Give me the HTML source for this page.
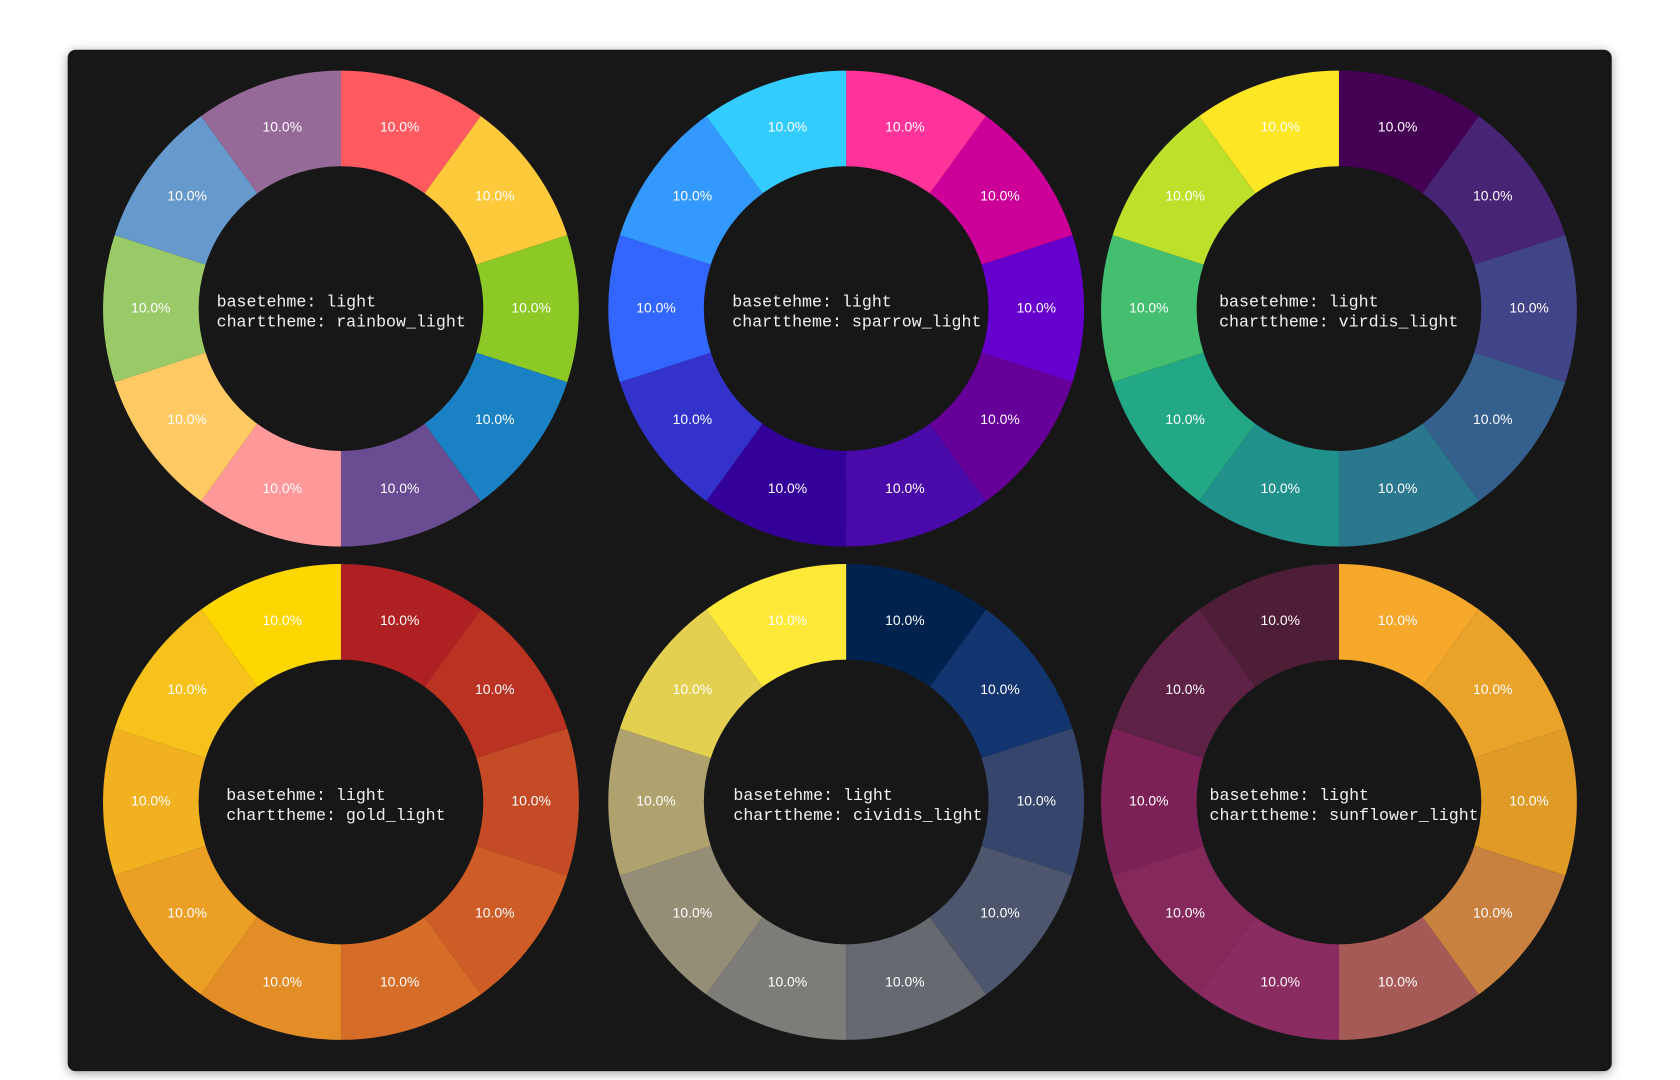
<!DOCTYPE html>
<html><head><meta charset="utf-8"><style>
html,body{margin:0;padding:0;background:#fff;width:1680px;height:1080px;overflow:hidden}
#w{position:absolute;left:0;top:0;width:1680px;height:1080px;transform:scale(0.9955);transform-origin:0 0}
.card{position:absolute;left:68px;top:50px;width:1551px;height:1026px;background:#171717;border-radius:8px;box-shadow:0 2px 10px rgba(0,0,0,.35)}
svg{position:absolute;left:0;top:0}
.l{font-family:"Liberation Sans",sans-serif;font-size:14px;fill:#fff;text-anchor:middle;dominant-baseline:middle}
.c{font-family:"Liberation Mono",monospace;font-size:16.7px;fill:#f0f0f0}
</style></head><body>
<div id="w">
<div class="card"></div>
<svg width="1680" height="1080" viewBox="0 0 1680 1080">
<defs><path id="s" d="M0,-239 A239,239 0 0 1 140.48,-193.35 L84.05,-115.69 A143,143 0 0 0 0,-143 Z"/></defs>

<g transform="translate(342.5,310)">
<use href="#s" fill="#FF5A5F"/><use href="#s" fill="#FFC93C" transform="rotate(36)"/><use href="#s" fill="#8DC926" transform="rotate(72)"/><use href="#s" fill="#1A82C4" transform="rotate(108)"/><use href="#s" fill="#6A4C93" transform="rotate(144)"/><use href="#s" fill="#FF9999" transform="rotate(180)"/><use href="#s" fill="#FFCA64" transform="rotate(216)"/><use href="#s" fill="#9ACA68" transform="rotate(252)"/><use href="#s" fill="#6699CC" transform="rotate(288)"/><use href="#s" fill="#966A98" transform="rotate(324)"/>
<text class="l" x="59" y="-181.7">10.0%</text><text class="l" x="154.5" y="-112.3">10.0%</text><text class="l" x="191" y="0">10.0%</text><text class="l" x="154.5" y="112.3">10.0%</text><text class="l" x="59" y="181.7">10.0%</text><text class="l" x="-59" y="181.7">10.0%</text><text class="l" x="-154.5" y="112.3">10.0%</text><text class="l" x="-191" y="0">10.0%</text><text class="l" x="-154.5" y="-112.3">10.0%</text><text class="l" x="-59" y="-181.7">10.0%</text>
</g>
<text class="c" x="217.6" y="308" xml:space="preserve">basetehme: light</text><text class="c" x="217.6" y="328" xml:space="preserve">charttheme: rainbow_light</text>

<g transform="translate(850,310)">
<use href="#s" fill="#FF3399"/><use href="#s" fill="#CC0099" transform="rotate(36)"/><use href="#s" fill="#6600CC" transform="rotate(72)"/><use href="#s" fill="#660099" transform="rotate(108)"/><use href="#s" fill="#4A0AAA" transform="rotate(144)"/><use href="#s" fill="#330099" transform="rotate(180)"/><use href="#s" fill="#3333CC" transform="rotate(216)"/><use href="#s" fill="#3366FF" transform="rotate(252)"/><use href="#s" fill="#3399FF" transform="rotate(288)"/><use href="#s" fill="#33CCFF" transform="rotate(324)"/>
<text class="l" x="59" y="-181.7">10.0%</text><text class="l" x="154.5" y="-112.3">10.0%</text><text class="l" x="191" y="0">10.0%</text><text class="l" x="154.5" y="112.3">10.0%</text><text class="l" x="59" y="181.7">10.0%</text><text class="l" x="-59" y="181.7">10.0%</text><text class="l" x="-154.5" y="112.3">10.0%</text><text class="l" x="-191" y="0">10.0%</text><text class="l" x="-154.5" y="-112.3">10.0%</text><text class="l" x="-59" y="-181.7">10.0%</text>
</g>
<text class="c" x="735.6" y="308" xml:space="preserve">basetehme: light</text><text class="c" x="735.6" y="328" xml:space="preserve">charttheme: sparrow_light</text>

<g transform="translate(1345,310)">
<use href="#s" fill="#440154"/><use href="#s" fill="#482475" transform="rotate(36)"/><use href="#s" fill="#414487" transform="rotate(72)"/><use href="#s" fill="#355F8D" transform="rotate(108)"/><use href="#s" fill="#2A788E" transform="rotate(144)"/><use href="#s" fill="#21918C" transform="rotate(180)"/><use href="#s" fill="#22A884" transform="rotate(216)"/><use href="#s" fill="#44BF70" transform="rotate(252)"/><use href="#s" fill="#BDE02A" transform="rotate(288)"/><use href="#s" fill="#FDE725" transform="rotate(324)"/>
<text class="l" x="59" y="-181.7">10.0%</text><text class="l" x="154.5" y="-112.3">10.0%</text><text class="l" x="191" y="0">10.0%</text><text class="l" x="154.5" y="112.3">10.0%</text><text class="l" x="59" y="181.7">10.0%</text><text class="l" x="-59" y="181.7">10.0%</text><text class="l" x="-154.5" y="112.3">10.0%</text><text class="l" x="-191" y="0">10.0%</text><text class="l" x="-154.5" y="-112.3">10.0%</text><text class="l" x="-59" y="-181.7">10.0%</text>
</g>
<text class="c" x="1224.6" y="308" xml:space="preserve">basetehme: light</text><text class="c" x="1224.6" y="328" xml:space="preserve">charttheme: virdis_light</text>

<g transform="translate(342.5,805.6)">
<use href="#s" fill="#AE2021"/><use href="#s" fill="#BA3222" transform="rotate(36)"/><use href="#s" fill="#C44B25" transform="rotate(72)"/><use href="#s" fill="#CD5C27" transform="rotate(108)"/><use href="#s" fill="#D56C27" transform="rotate(144)"/><use href="#s" fill="#E38D27" transform="rotate(180)"/><use href="#s" fill="#EC9F25" transform="rotate(216)"/><use href="#s" fill="#F1B121" transform="rotate(252)"/><use href="#s" fill="#F6C21B" transform="rotate(288)"/><use href="#s" fill="#FFD700" transform="rotate(324)"/>
<text class="l" x="59" y="-181.7">10.0%</text><text class="l" x="154.5" y="-112.3">10.0%</text><text class="l" x="191" y="0">10.0%</text><text class="l" x="154.5" y="112.3">10.0%</text><text class="l" x="59" y="181.7">10.0%</text><text class="l" x="-59" y="181.7">10.0%</text><text class="l" x="-154.5" y="112.3">10.0%</text><text class="l" x="-191" y="0">10.0%</text><text class="l" x="-154.5" y="-112.3">10.0%</text><text class="l" x="-59" y="-181.7">10.0%</text>
</g>
<text class="c" x="227.3" y="803.6" xml:space="preserve">basetehme: light</text><text class="c" x="227.3" y="823.6" xml:space="preserve">charttheme: gold_light</text>

<g transform="translate(850,805.6)">
<use href="#s" fill="#00224E"/><use href="#s" fill="#123570" transform="rotate(36)"/><use href="#s" fill="#35456C" transform="rotate(72)"/><use href="#s" fill="#4D566D" transform="rotate(108)"/><use href="#s" fill="#666970" transform="rotate(144)"/><use href="#s" fill="#7D7C78" transform="rotate(180)"/><use href="#s" fill="#948E77" transform="rotate(216)"/><use href="#s" fill="#AFA26E" transform="rotate(252)"/><use href="#s" fill="#E3CF50" transform="rotate(288)"/><use href="#s" fill="#FEE838" transform="rotate(324)"/>
<text class="l" x="59" y="-181.7">10.0%</text><text class="l" x="154.5" y="-112.3">10.0%</text><text class="l" x="191" y="0">10.0%</text><text class="l" x="154.5" y="112.3">10.0%</text><text class="l" x="59" y="181.7">10.0%</text><text class="l" x="-59" y="181.7">10.0%</text><text class="l" x="-154.5" y="112.3">10.0%</text><text class="l" x="-191" y="0">10.0%</text><text class="l" x="-154.5" y="-112.3">10.0%</text><text class="l" x="-59" y="-181.7">10.0%</text>
</g>
<text class="c" x="736.7" y="803.6" xml:space="preserve">basetehme: light</text><text class="c" x="736.7" y="823.6" xml:space="preserve">charttheme: cividis_light</text>

<g transform="translate(1345,805.6)">
<use href="#s" fill="#F5A82A"/><use href="#s" fill="#EAA32A" transform="rotate(36)"/><use href="#s" fill="#DF9B25" transform="rotate(72)"/><use href="#s" fill="#C98140" transform="rotate(108)"/><use href="#s" fill="#A65A55" transform="rotate(144)"/><use href="#s" fill="#8A2C62" transform="rotate(180)"/><use href="#s" fill="#85285C" transform="rotate(216)"/><use href="#s" fill="#7C2158" transform="rotate(252)"/><use href="#s" fill="#5E2246" transform="rotate(288)"/><use href="#s" fill="#4E1D36" transform="rotate(324)"/>
<text class="l" x="59" y="-181.7">10.0%</text><text class="l" x="154.5" y="-112.3">10.0%</text><text class="l" x="191" y="0">10.0%</text><text class="l" x="154.5" y="112.3">10.0%</text><text class="l" x="59" y="181.7">10.0%</text><text class="l" x="-59" y="181.7">10.0%</text><text class="l" x="-154.5" y="112.3">10.0%</text><text class="l" x="-191" y="0">10.0%</text><text class="l" x="-154.5" y="-112.3">10.0%</text><text class="l" x="-59" y="-181.7">10.0%</text>
</g>
<text class="c" x="1215" y="803.6" xml:space="preserve">basetehme: light</text><text class="c" x="1215" y="823.6" xml:space="preserve">charttheme: sunflower_light</text>
</svg>
</div>
</body></html>
